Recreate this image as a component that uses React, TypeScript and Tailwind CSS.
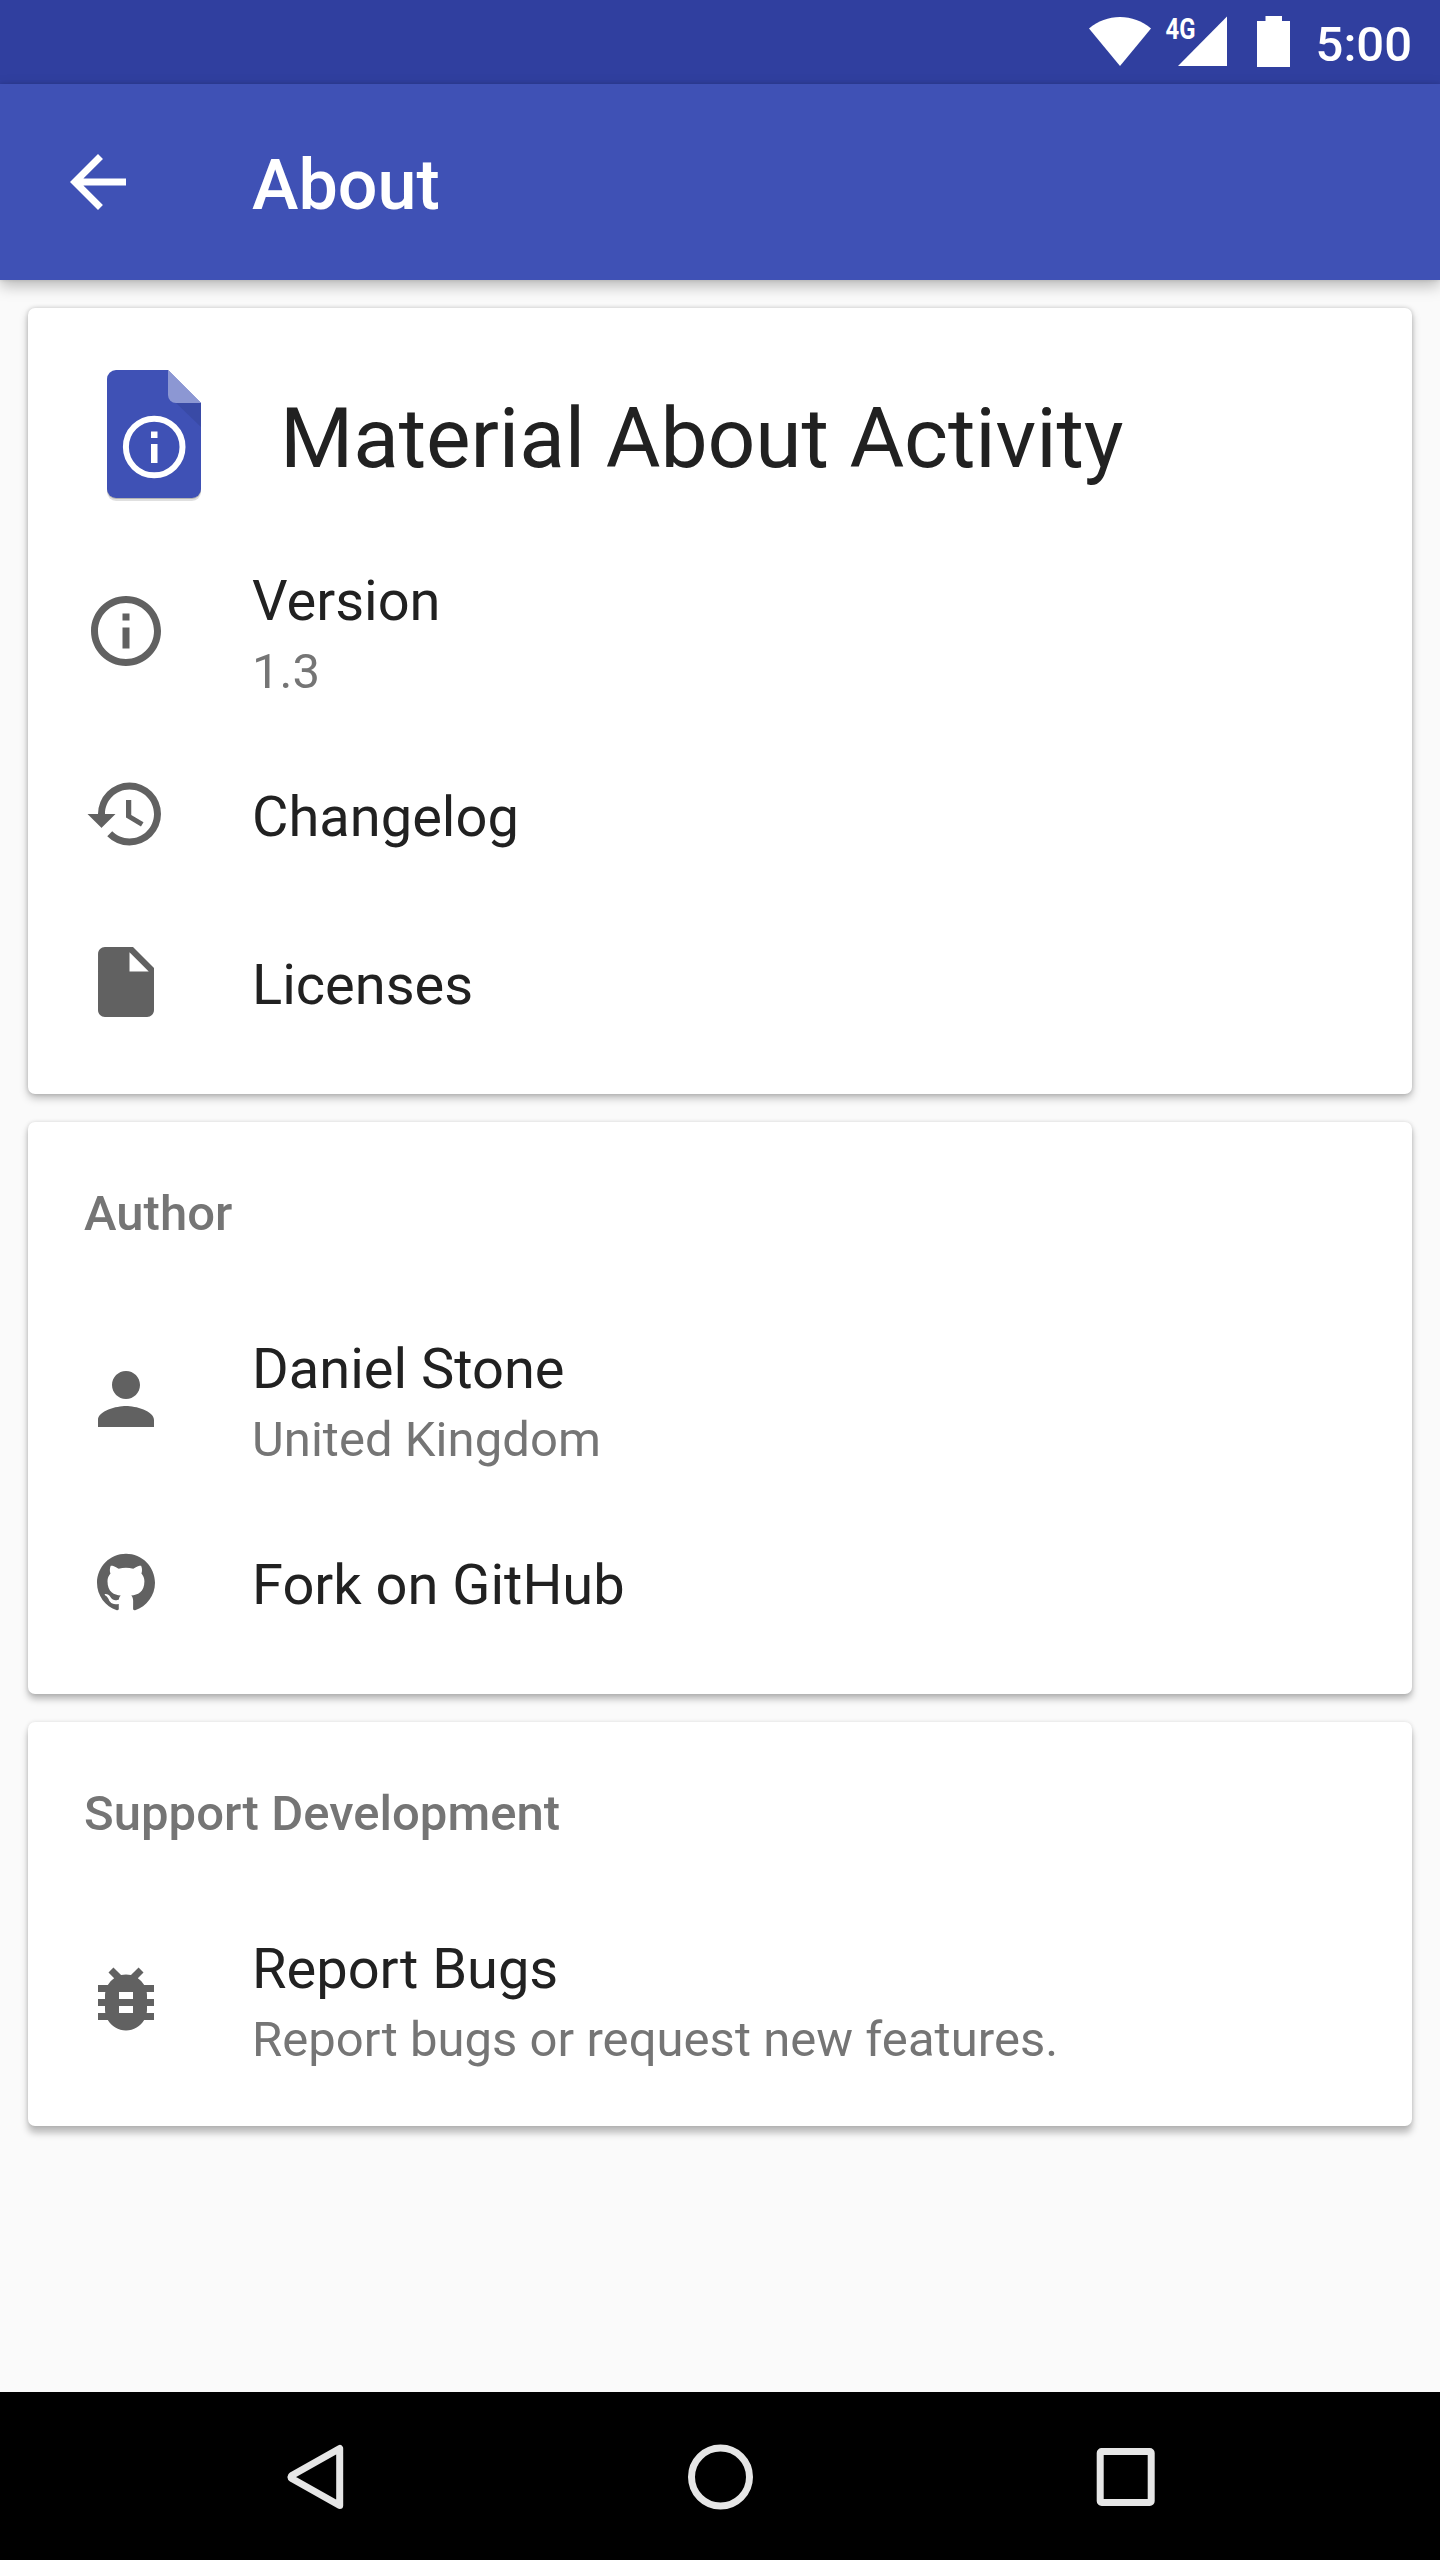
import React from "react";

function Icon({ d, className }: { d: string; className: string }) {
  return (
    <svg viewBox="0 0 24 24" className={className} fill="currentColor">
      <path d={d} />
    </svg>
  );
}

const icons = {
  back: "M20 11H7.83l5.59-5.59L12 4l-8 8 8 8 1.41-1.41L7.83 13H20v-2z",
  info: "M11 17h2v-6h-2v6zm1-15C6.48 2 2 6.48 2 12s4.48 10 10 10 10-4.480 10-10S17.52 2 12 2zm0 18c-4.410 0-8-3.590-8-8s3.590-8 8-8 8 3.590 8 8-3.590 8-8 8zM11 9h2V7h-2v2z",
  history:
    "M13 3a9 9 0 0 0-9 9H1l3.890 3.890.07.14L9 12H6c0-3.870 3.130-7 7-7s7 3.130 7 7-3.130 7-7 7c-1.930 0-3.680-.79-4.940-2.060l-1.420 1.420A8.954 8.954 0 0 0 13 21a9 9 0 0 0 0-18zm-1 5v5l4.280 2.540.72-1.210-3.500-2.080V8H12z",
  file: "M6 2c-1.100 0-1.990.9-1.990 2L4 20c0 1.100.89 2 1.990 2H18c1.100 0 2-.9 2-2V8l-6-6H6zm7 7V3.500L18.500 9H13z",
  person:
    "M12 12c2.210 0 4-1.790 4-4s-1.790-4-4-4-4 1.790-4 4 1.790 4 4 4zm0 2c-2.670 0-8 1.340-8 4v2h16v-2c0-2.660-5.330-4-8-4z",
  github:
    "M12 .297c-6.63 0-12 5.373-12 12 0 5.303 3.438 9.800 8.205 11.385.6.113.82-.258.82-.577 0-.285-.01-1.040-.015-2.040-3.338.724-4.042-1.610-4.042-1.610C4.422 18.070 3.633 17.700 3.633 17.700c-1.087-.744.084-.729.084-.729 1.205.084 1.838 1.236 1.838 1.236 1.070 1.835 2.809 1.305 3.495.998.108-.776.417-1.305.76-1.605-2.665-.3-5.466-1.332-5.466-5.930 0-1.310.465-2.380 1.235-3.220-.135-.303-.54-1.523.105-3.176 0 0 1.005-.322 3.300 1.230.96-.267 1.980-.399 3-.405 1.020.006 2.040.138 3 .405 2.280-1.552 3.285-1.230 3.285-1.230.645 1.653.24 2.873.12 3.176.765.84 1.230 1.910 1.230 3.220 0 4.610-2.805 5.625-5.475 5.920.42.36.81 1.096.81 2.220 0 1.606-.015 2.896-.015 3.286 0 .315.21.69.825.57C20.565 22.092 24 17.592 24 12.297c0-6.627-5.373-12-12-12",
  bug: "M20 8h-2.810c-.45-.78-1.070-1.450-1.820-1.960L17 4.410 15.590 3l-2.170 2.170C12.960 5.060 12.490 5 12 5c-.49 0-.96.06-1.410.17L8.410 3 7 4.410l1.620 1.630C7.880 6.550 7.260 7.220 6.810 8H4v2h2.090c-.05.33-.09.66-.09 1v1H4v2h2v1c0 .34.04.67.09 1H4v2h2.810c1.040 1.790 2.970 3 5.190 3s4.150-1.210 5.190-3H20v-2h-2.090c.05-.33.09-.66.09-1v-1h2v-2h-2v-1c0-.34-.04-.67-.09-1H20V8zm-6 8h-4v-2h4v2zm0-4h-4v-2h4v2z",
};

function StatusBar() {
  return (
    <div className="flex h-[84px] items-start justify-end bg-[#303f9f] pr-7 text-white">
      <svg viewBox="0 0 212 84" className="h-[84px] w-[212px]" fill="currentColor">
        <path d="M9 28.500C18 21 28.500 17 40 17S62 21 71 28.500L40 66z" />
        <text
          x="85.500"
          y="39"
          fontSize="29.500"
          fontWeight="700"
          textLength="30"
          lengthAdjust="spacingAndGlyphs"
          className="font-['Roboto',sans-serif]"
        >
          4G
        </text>
        <path d="M147 16.500V66H98z" />
        <path d="M185.500 16H202v5h8v46h-33V21h8.500z" />
      </svg>
      <span className="mt-4 ml-[24px] text-[49px] leading-[58px] font-medium">5:00</span>
    </div>
  );
}

function AppBar() {
  return (
    <header className="relative z-10 flex h-[196px] items-center bg-[#3f51b5] pl-14 text-white shadow-[0_6px_14px_rgba(0,0,0,0.26),0_0_4px_rgba(0,0,0,0.12)]">
      <Icon d={icons.back} className="size-[84px]" />
      <h1 className="ml-28 pt-1.5 text-[70px] leading-[82px] font-medium">About</h1>
    </header>
  );
}

function Card({
  title,
  shadow = "shadow-[0_5px_7px_rgba(0,0,0,0.27),0_0_4px_rgba(0,0,0,0.12)]",
  children,
}: {
  title?: string;
  shadow?: string;
  children: React.ReactNode;
}) {
  return (
    <section className={`rounded-[7px] bg-white pb-7 ${shadow}`}>
      {title && (
        <h2 className="h-[178px] px-14 pt-[63px] text-[49px] leading-[58px] font-medium tracking-[0.04px] text-[#757575]">
          {title}
        </h2>
      )}
      {children}
    </section>
  );
}

function Row({
  icon,
  title,
  subtitle,
  iconClass = "size-[84px]",
}: {
  icon: string;
  title: string;
  subtitle?: string;
  iconClass?: string;
}) {
  return (
    <div className={subtitle ? "flex h-[198px] items-center pl-14" : "flex h-[168px] items-center pl-14"}>
      <div className="flex size-[84px] items-center justify-center text-[#616161]">
        <Icon d={icon} className={iconClass} />
      </div>
      <div className="ml-[84px] flex flex-col pt-1.5">
        <p className="text-[56px] leading-[66px] text-[#212121]">{title}</p>
        {subtitle && (
          <p className="mt-[9px] -mb-px text-[49px] leading-[58px] tracking-[0.04px] text-[#757575]">{subtitle}</p>
        )}
      </div>
    </div>
  );
}

function AppLogo() {
  return (
    <svg viewBox="0 0 108 150" className="h-[150px] w-[108px]">
      <path d="M7 128h94v4a9 9 0 0 1-9 9H16a9 9 0 0 1-9-9z" fill="#000" opacity="0.12" />
      <path d="M7 128h94v2a9 9 0 0 1-9 9H16a9 9 0 0 1-9-9z" fill="#000" opacity="0.2" />
      <path d="M16 10h52l33 33v86a9 9 0 0 1-9 9H16a9 9 0 0 1-9-9V19a9 9 0 0 1 9-9z" fill="#3f51b5" />
      <path d="M74 41l27 26V43z" fill="#394aa6" />
      <path d="M68 10l33 33H76a8 8 0 0 1-8-8z" fill="#8c97d3" />
      <circle cx="54.200" cy="87" r="28.300" fill="none" stroke="#fff" strokeWidth="6" />
      <path d="M51 71.500h6.500v6.500h-6.500zM51 84h6.500v19h-6.500z" fill="#fff" />
    </svg>
  );
}

function NavBar() {
  return (
    <nav className="grid h-[168px] grid-cols-[630px_180px_630px] items-center bg-black pt-px text-[#e6e6e6]">
      <svg viewBox="0 0 66 66" className="ml-[282px] size-[66px]" fill="none" stroke="currentColor" strokeWidth="7">
        <path d="M57.700 4.500V61.500L10.200 34.800Q7.500 33 10.200 31.200Z" strokeLinejoin="round" />
      </svg>
      <svg viewBox="0 0 66 66" className="size-[66px] justify-self-center" fill="none" stroke="currentColor" strokeWidth="7">
        <circle cx="33.500" cy="33" r="29" />
      </svg>
      <svg viewBox="0 0 66 66" className="ml-[283px] size-[66px]" fill="none" stroke="currentColor" strokeWidth="7">
        <rect x="7.200" y="7.500" width="51" height="51" rx="1.500" />
      </svg>
    </nav>
  );
}

export default function App() {
  return (
    <div className="flex h-[2560px] w-[1440px] flex-col overflow-hidden bg-[#fafafa] font-['Roboto',sans-serif]">
      <StatusBar />
      <AppBar />
      <main className="flex flex-1 flex-col gap-7 p-7">
        <Card shadow="shadow-[0_4px_8px_rgba(0,0,0,0.26),0_0_4px_rgba(0,0,0,0.16)]">
          <div className="flex h-[224px] items-start pt-[52px] pl-[72px]">
            <AppLogo />
            <h2 className="ml-[72px] pt-[30px] text-[84px] leading-[98px] tracking-[-0.13px] text-[#212121]">
              Material About Activity
            </h2>
          </div>
          <Row icon={icons.info} title="Version" subtitle="1.3" />
          <Row icon={icons.history} title="Changelog" />
          <Row icon={icons.file} title="Licenses" />
        </Card>
        <Card title="Author">
          <Row icon={icons.person} title="Daniel Stone" subtitle="United Kingdom" />
          <Row icon={icons.github} title="Fork on GitHub" iconClass="size-[58px]" />
        </Card>
        <Card title="Support Development" shadow="shadow-[0_7px_7px_rgba(0,0,0,0.25),0_0_4px_rgba(0,0,0,0.12)]">
          <Row icon={icons.bug} title="Report Bugs" subtitle="Report bugs or request new features." />
        </Card>
      </main>
      <NavBar />
    </div>
  );
}
